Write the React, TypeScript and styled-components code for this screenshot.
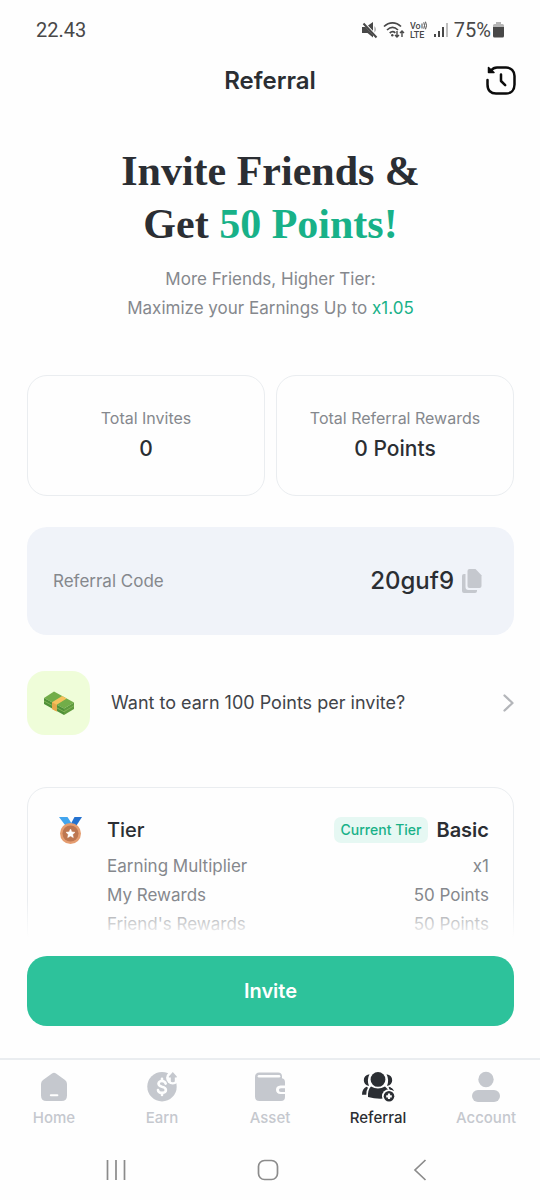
import React from 'react';
import styled, { createGlobalStyle } from 'styled-components';

const color = {
  ink: '#2b2e33',
  text: '#414449',
  muted: '#85888d',
  idle: '#c5c8ce',
  line: '#eaedf0',
  green: '#2dc29b',
  greenText: '#18b188',
  system: '#8b8b8b',
};

const GlobalStyle = createGlobalStyle`
  *, *::before, *::after { box-sizing: border-box; }
  body {
    margin: 0;
    background: #fefefe;
    color: ${color.ink};
    font-family: Inter, "Liberation Sans", sans-serif;
  }
  button { font: inherit; color: inherit; border: 0; padding: 0; background: none; cursor: pointer; }
  a { color: inherit; text-decoration: none; }
  h1, h2, p, dl, dd, dt { margin: 0; font-size: inherit; font-weight: inherit; }
  svg { display: block; flex: none; }
`;

const Page = styled.div`
  min-height: 100vh;
  display: flex;
  flex-direction: column;
`;

const StatusBar = styled.div`
  height: 60px;
  padding: 0 36px;
  display: flex;
  align-items: center;
  justify-content: space-between;
  font: 400 20px/24px Roboto, sans-serif;
  color: #484848;
`;

const StatusIcons = styled.div`
  display: flex;
  align-items: center;
  gap: 5px;
`;

const Charge = styled.span`
  display: flex;
  align-items: center;
  gap: 2px;
`;

const Header = styled.header`
  display: grid;
  grid-template-columns: 32px 1fr 32px;
  align-items: center;
  height: 42px;
  padding: 0 23px;
`;

const Title = styled.h1`
  grid-column: 2;
  text-align: center;
  font-size: 24px;
  line-height: 32px;
  font-weight: 600;
`;

const Main = styled.main`
  flex: 1;
  display: flex;
  flex-direction: column;
  padding: 43px 26px 0 27px;
`;

const Hero = styled.section`
  display: flex;
  flex-direction: column;
  gap: 14px;
  text-align: center;
`;

const Headline = styled.h2`
  font: 700 42px/53px "Liberation Serif", serif;
`;

const Lead = styled.p`
  font-size: 17px;
  line-height: 29px;
  color: ${color.muted};
`;

const Accent = styled.span`
  color: ${color.greenText};
`;

const Stats = styled.dl`
  display: grid;
  grid-template-columns: 1fr 1fr;
  gap: 11px;
  margin-top: 52px;
`;

const StatCard = styled.div`
  padding: 30px 8px;
  border: 1px solid ${color.line};
  border-radius: 20px;
  text-align: center;
`;

const StatLabel = styled.dt`
  font-size: 16px;
  line-height: 24px;
  color: ${color.muted};
`;

const StatValue = styled.dd`
  margin-top: 3px;
  font-size: 21px;
  line-height: 32px;
  font-weight: 500;
`;

const CodeBox = styled.section`
  display: flex;
  align-items: center;
  justify-content: space-between;
  margin-top: 31px;
  padding: 38px 31px 38px 26px;
  border-radius: 20px;
  background: #f0f3f9;
`;

const CodeLabel = styled.span`
  font-size: 17px;
  line-height: 24px;
  color: ${color.muted};
`;

const CodeValue = styled.span`
  display: flex;
  align-items: center;
  gap: 7px;
  font-size: 24px;
  line-height: 32px;
  font-weight: 500;
`;

const Promo = styled.a`
  display: flex;
  align-items: center;
  gap: 21px;
  margin-top: 36px;
  font-size: 18px;
  line-height: 24px;
  color: ${color.text};
`;

const PromoTile = styled.span`
  display: grid;
  place-items: center;
  width: 63px;
  height: 64px;
  border-radius: 18px;
  background: #effdd9;
`;

const PromoText = styled.span`
  flex: 1;
`;

const TierCard = styled.section`
  display: flex;
  align-items: flex-start;
  gap: 24px;
  margin-top: 52px;
  padding: 28px 24px 14px 30px;
  border: 1px solid ${color.line};
  border-radius: 20px;
`;

const TierBody = styled.div`
  flex: 1;
`;

const TierHead = styled.div`
  display: flex;
  align-items: center;
  gap: 8px;
  margin-bottom: 8px;
  font-size: 20px;
  line-height: 28px;
  font-weight: 500;
`;

const TierTitle = styled.h2`
  flex: 1;
`;

const TierName = styled.span`
  font-weight: 600;
`;

const Badge = styled.span`
  padding: 2px 7px;
  border-radius: 7px;
  background: #e6f8f3;
  color: ${color.greenText};
  font-size: 14px;
  line-height: 22px;
`;

const TierRow = styled.div`
  display: flex;
  justify-content: space-between;
  font-size: 17px;
  line-height: 29px;
  color: ${color.muted};
`;

const Dock = styled.div`
  position: sticky;
  bottom: 0;
  margin-top: -56px;
`;

const Action = styled.div`
  padding: 56px 26px 32px 27px;
  background: linear-gradient(rgba(254, 254, 254, 0), #fefefe 38px);
`;

const InviteButton = styled.button`
  display: block;
  width: 100%;
  padding: 21px;
  border-radius: 20px;
  background: ${color.green};
  color: #fff;
  font-size: 20px;
  line-height: 28px;
  font-weight: 600;
`;

const Tabs = styled.nav`
  display: grid;
  grid-template-columns: repeat(5, 1fr);
  padding: 11px 0 12px;
  border-top: 2px solid ${color.line};
  background: #fefefe;
`;

const Tab = styled.a<{ $active?: boolean }>`
  display: flex;
  flex-direction: column;
  align-items: center;
  gap: 5px;
  font-size: 15px;
  line-height: 20px;
  font-weight: 500;
  color: ${(p) => (p.$active ? color.ink : color.idle)};
`;

const SystemBar = styled.div`
  display: grid;
  grid-template-columns: repeat(3, 1fr);
  padding: 0 44px 0 40px;
  background: #fefefe;
  color: ${color.system};
`;

const SystemButton = styled.button`
  display: grid;
  place-items: center;
  height: 60px;
`;

const MuteIcon = () => (
  <svg width="17" height="18" viewBox="0 0 17 18" fill="currentColor" aria-hidden="true">
    <path d="M1 6h3.500l4 4.200 3.500 3.800V16.500L6.500 12H1zM7 4.500L12 1v8.800z" />
    <path d="M2.500 2.500L15.500 16.500" stroke="currentColor" strokeWidth="2" />
    <path d="M13.500 5v6.500q2.500-3.200 0-6.500z" opacity=".6" />
  </svg>
);

const WifiIcon = () => (
  <svg width="22" height="18" viewBox="0 0 22 18" fill="none" stroke="currentColor" aria-hidden="true">
    <path d="M1 5.500C6 .7 13 .7 18 5.500M4 9c3.500-3.300 7.500-3.300 11 0M6.700 12c2-1.800 3.800-1.800 5.600-.2" strokeWidth="1.700" />
    <circle cx="9.300" cy="14.300" r="1.200" fill="currentColor" stroke="none" />
    <path d="M14 10v6m-2-2l2 2 2-2M19 16v-6m-2 2l2-2 2 2" strokeWidth="1.400" />
  </svg>
);

const VolteIcon = () => (
  <svg width="18" height="18" viewBox="0 0 18 18" fill="currentColor" aria-label="VoLTE">
    <g fontFamily="Roboto, sans-serif" fontWeight="500">
      <text x="0" y="8" fontSize="9">Vo</text>
      <text x="0" y="17" fontSize="9">LTE</text>
    </g>
    <path d="M12 2.500v5M13.800 1.300q1.400 3.200 0 6.400M15.500 .7q2 3.900 0 7.600" fill="none" stroke="currentColor" strokeWidth="1" />
  </svg>
);

const SignalIcon = () => (
  <svg width="16" height="16" viewBox="0 0 16 16" fill="currentColor" aria-hidden="true">
    <path d="M1 12h2v3H1zM5 9h2v6H5zM9 5h2v10H9z" />
    <path d="M13 1h2v14h-2z" opacity=".35" />
  </svg>
);

const BatteryIcon = () => (
  <svg width="11" height="16" viewBox="0 0 11 16" fill="currentColor" aria-hidden="true">
    <path d="M3 0h5v2h1.500Q11 2 11 3.500V5H0V3.500Q0 2 1.500 2H3z" opacity=".4" />
    <path d="M0 5h11v9q0 1.500-1.500 1.500h-8Q0 15.500 0 14z" />
  </svg>
);

const HistoryIcon = () => (
  <svg width="32" height="32" viewBox="0 0 32 32" fill="none" stroke="#0b0b0b" strokeWidth="2.500" strokeLinecap="round" strokeLinejoin="round" aria-hidden="true">
    <path d="M2.500 15v4.500c0 6 3.500 9 8.500 9h10c5 0 8.500-3.500 8.500-9V11c0-5-3.500-8.500-8.500-8.500h-9c-2.500 0-4.500 1.200-6 3" />
    <path d="M3.500 2.500v5h5.500z" fill="#0b0b0b" strokeWidth="1.500" />
    <path d="M16 9.500V16l4.200 4.200" />
  </svg>
);

const CopyIcon = () => (
  <svg width="22" height="26" viewBox="0 0 22 26" fill={color.idle} aria-hidden="true">
    <path d="M8.500 1h6l6 6.300V18q0 2-2 2H8.500q-2 0-2-2V3q0-2 2-2z" />
    <path d="M1 8q0-2 2-2h1.500v13q0 3 3 3h8.500v1q0 2-2 2H3q-2 0-2-2z" />
  </svg>
);

const CashIcon = () => (
  <svg width="32" height="26" viewBox="0 0 32 26" aria-hidden="true">
    <path d="M1 8l10-6.500 20 11-10 6z" fill="#72ad49" />
    <path d="M1 8l20 10.500V25L1 14z" fill="#4f9138" />
    <path d="M21 18.500l10-6V19l-10 6z" fill="#5f9b3e" />
    <path d="M1 11l20 10.700L31 15.700" fill="none" stroke="#7fb356" />
    <path d="M9 12.200l10.200-6.300 4.500 2.500-10 6.300v6.800L9 19z" fill="#f6c15c" />
    <path d="M9 12.200l4.700 2.500v6.800L9 19z" fill="#e5a84a" />
  </svg>
);

const ChevronIcon = () => (
  <svg width="14" height="20" viewBox="0 0 14 20" fill="none" stroke="#b4b6ba" strokeWidth="2.300" strokeLinecap="round" strokeLinejoin="round" aria-hidden="true">
    <path d="M4.500 2.500l8 7.500-8 7.500" />
  </svg>
);

const MedalIcon = () => (
  <svg width="25" height="29" viewBox="0 0 25 29" aria-hidden="true">
    <path d="M1 1h8.500l4.500 7-5.500 3z" fill="#42a5ee" />
    <path d="M16.500 1H24l-6.500 10-5-2.500z" fill="#2472cf" />
    <circle cx="12.500" cy="17.500" r="10.500" fill="#e59d70" />
    <circle cx="12.500" cy="17.500" r="8" fill="#bd7650" />
    <path d="M12.500 13l1.400 2.900 3.100.4-2.300 2.200.6 3.100-2.800-1.500-2.800 1.500.6-3.100L8 16.300l3.100-.4z" fill="#fff" stroke="#fff" strokeWidth=".5" />
  </svg>
);

const HomeIcon = () => (
  <svg width="32" height="32" viewBox="0 0 32 32" fill="currentColor" aria-hidden="true">
    <path d="M14 2.500q2-1.500 4 0l9 6.500q2 1.500 2 4v11.500Q29 30 23.500 30h-15Q3 30 3 24.500V13q0-2.500 2-4z" />
    <path d="M12.800 24.300h6.600" stroke="#fefefe" strokeWidth="2" strokeLinecap="round" />
  </svg>
);

const EarnIcon = () => (
  <svg width="32" height="32" viewBox="0 0 32 32" fill="currentColor" aria-hidden="true">
    <circle cx="16" cy="15.700" r="14.700" />
    <circle cx="26.700" cy="6.800" r="6.600" fill="#fefefe" />
    <path d="M26.800 1l4 4.600q.4.900-.6.900h-1.400v3.800q0 1-2 1t-2-1V6.500h-1.400q-1 0-.6-.9z" />
    <path d="M19.700 12.600q-.7-2.600-3.700-2.600t-3.500 2.500q0 2.300 3.500 3.200 3.900.9 3.900 3.400 0 2.800-3.900 2.800t-4-2.900M16 7.700v2m0 12.300v2" fill="none" stroke="#fefefe" strokeWidth="2.600" strokeLinecap="round" />
  </svg>
);

const AssetIcon = () => (
  <svg width="32" height="32" viewBox="0 0 32 32" fill="currentColor" aria-hidden="true">
    <path d="M1 6q0-4.500 4.500-4.500H24q4 0 4 4v1.700q3 .6 3 4v3.300h-4.500q-4.500.3-4.500 4.300t4.500 4.300H31V26q0 4-4 4H5.500Q1 30 1 25.500z" />
    <path d="M5 5.200H25" stroke="#fefefe" strokeWidth="2.600" strokeLinecap="round" />
    <path d="M31 17.200h-4q-2.200 0-2.200 1.900t2.200 1.900h4z" />
  </svg>
);

const ReferralIcon = () => (
  <svg width="36" height="32" viewBox="0 0 36 32" fill="currentColor" aria-hidden="true">
    <path d="M9.500 3.200Q3.800 4 3.800 9.300q0 4.500 5.200 5.700Q6.500 9 9.500 3.200zM26.500 3.200Q32.200 4 32.200 9.300q0 4.500-5.200 5.700Q29.500 9 26.500 3.200z" />
    <circle cx="18" cy="8.400" r="7.400" />
    <path d="M6.500 15.700q-4.500 1.800-4.500 8h4.300q.1-4.700 1.700-7zM28.500 15.700q3.800.8 5 4l-3.500-1.500z" />
    <path d="M11 15.500q7 4.200 14 0l3.500 3.500v8q-10.500 2-20.500-1-.3-7.500 3-10.500z" />
    <circle cx="29" cy="25.300" r="7" fill="#fefefe" />
    <path d="M28.700 15.900q4.300 1 5.300 4.200-2-1.600-4.500-1.700z" />
    <circle cx="29" cy="25.300" r="5.300" />
    <path d="M29 22.500v5.600M26.200 25.300h5.600" stroke="#fefefe" strokeWidth="2.200" />
  </svg>
);

const AccountIcon = () => (
  <svg width="32" height="32" viewBox="0 0 32 32" fill="currentColor" aria-hidden="true">
    <circle cx="16" cy="8.500" r="7.700" />
    <rect x="2" y="19" width="28" height="12" rx="6" />
  </svg>
);

const stats = [
  { label: 'Total Invites', value: '0' },
  { label: 'Total Referral Rewards', value: '0 Points' },
];

const tierRows = [
  { label: 'Earning Multiplier', value: 'x1' },
  { label: 'My Rewards', value: '50 Points' },
  { label: "Friend's Rewards", value: '50 Points' },
];

const tabs = [
  { label: 'Home', Icon: HomeIcon },
  { label: 'Earn', Icon: EarnIcon },
  { label: 'Asset', Icon: AssetIcon },
  { label: 'Referral', Icon: ReferralIcon, active: true },
  { label: 'Account', Icon: AccountIcon },
];

export default function App() {
  return (
    <Page>
      <GlobalStyle />
      <StatusBar>
        <span>22.43</span>
        <StatusIcons>
          <MuteIcon />
          <WifiIcon />
          <VolteIcon />
          <SignalIcon />
          <Charge>
            75%
            <BatteryIcon />
          </Charge>
        </StatusIcons>
      </StatusBar>

      <Header>
        <Title>Referral</Title>
        <button type="button" aria-label="History">
          <HistoryIcon />
        </button>
      </Header>

      <Main>
        <Hero>
          <Headline>
            Invite Friends &amp;
            <br />
            Get <Accent>50 Points!</Accent>
          </Headline>
          <Lead>
            More Friends, Higher Tier:
            <br />
            Maximize your Earnings Up to <Accent>x1.05</Accent>
          </Lead>
        </Hero>

        <Stats>
          {stats.map((s) => (
            <StatCard key={s.label}>
              <StatLabel>{s.label}</StatLabel>
              <StatValue>{s.value}</StatValue>
            </StatCard>
          ))}
        </Stats>

        <CodeBox>
          <CodeLabel>Referral Code</CodeLabel>
          <CodeValue>
            20guf9
            <button type="button" aria-label="Copy referral code">
              <CopyIcon />
            </button>
          </CodeValue>
        </CodeBox>

        <Promo href="#earn-more">
          <PromoTile>
            <CashIcon />
          </PromoTile>
          <PromoText>Want to earn 100 Points per invite?</PromoText>
          <ChevronIcon />
        </Promo>

        <TierCard>
          <MedalIcon />
          <TierBody>
            <TierHead>
              <TierTitle>Tier</TierTitle>
              <Badge>Current Tier</Badge>
              <TierName>Basic</TierName>
            </TierHead>
            <dl>
              {tierRows.map((r) => (
                <TierRow key={r.label}>
                  <dt>{r.label}</dt>
                  <dd>{r.value}</dd>
                </TierRow>
              ))}
            </dl>
          </TierBody>
        </TierCard>
      </Main>

      <Dock>
        <Action>
          <InviteButton type="button">Invite</InviteButton>
        </Action>
        <Tabs>
          {tabs.map(({ label, Icon, active }) => (
            <Tab key={label} href={`#${label.toLowerCase()}`} $active={active} aria-current={active ? 'page' : undefined}>
              <Icon />
              {label}
            </Tab>
          ))}
        </Tabs>
        <SystemBar>
          <SystemButton type="button" aria-label="Recent apps">
            <svg width="22" height="22" viewBox="0 0 22 22" stroke="currentColor" strokeWidth="1.700">
              <path d="M2.500 1v20M11 1v20M19.500 1v20" />
            </svg>
          </SystemButton>
          <SystemButton type="button" aria-label="Home screen">
            <svg width="22" height="22" viewBox="0 0 22 22" fill="none" stroke="currentColor" strokeWidth="1.700">
              <rect x="1.500" y="1.500" width="19" height="19" rx="6" />
            </svg>
          </SystemButton>
          <SystemButton type="button" aria-label="Back">
            <svg width="22" height="22" viewBox="0 0 22 22" fill="none" stroke="currentColor" strokeWidth="1.700">
              <path d="M16.500 1L6 11l10.500 10" />
            </svg>
          </SystemButton>
        </SystemBar>
      </Dock>
    </Page>
  );
}
